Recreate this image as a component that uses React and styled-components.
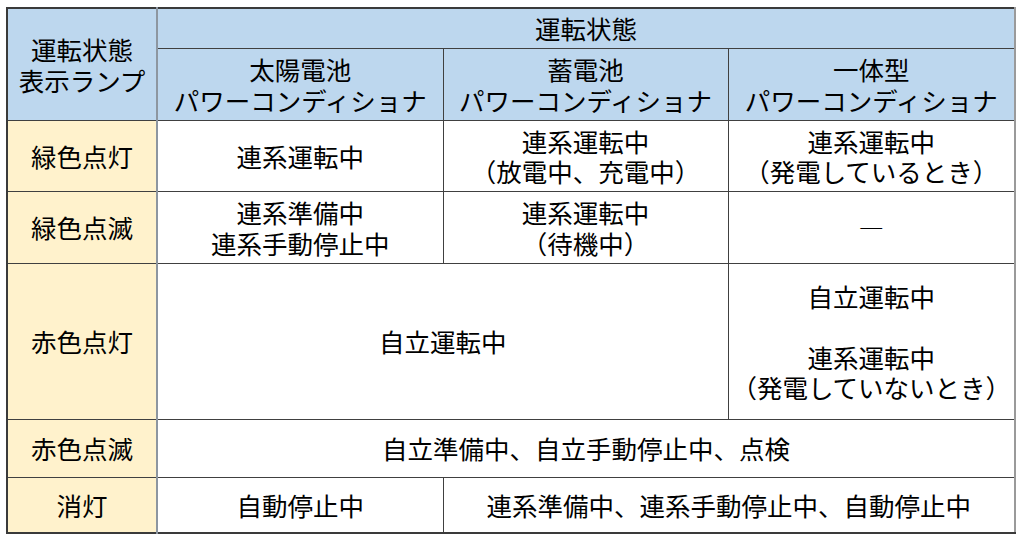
import React from "react";
import styled, { createGlobalStyle } from "styled-components";

const Global = createGlobalStyle`
  html, body { margin: 0; padding: 0; background: #ffffff; }
  body { font-family: "Noto Sans CJK JP", "Noto Sans", sans-serif; color: #000; }
`;

const Page = styled.div`
  padding: 7px 0 0 6px;
`;

const Table = styled.table`
  border-collapse: collapse;
  table-layout: fixed;
  width: 1008px;
  border: 2px solid #3a3a3a;
  border-right-color: #9a9a9a;
  font-size: 25.5px;
  line-height: 30.5px;
`;

const Cell = styled.td`
  border: 1px solid #404040;
  padding: 0;
  text-align: center;
  vertical-align: middle;
  white-space: nowrap;
  height: ${(p) => p.$h || "auto"};
  background: ${(p) =>
    p.$kind === "head" ? "#bdd7ee" : p.$kind === "lamp" ? "#fff2cc" : "#ffffff"};
  ${(p) => (p.$lamp ? "border-right: 2px solid #8d96a0;" : "")}
  ${(p) => (p.$lastCol ? "border-right-color: #9a9a9a;" : "")}
`;

const Line = styled.div`
  min-height: 30.5px;
`;

const Lines = ({ items }) => (
  <>
    {items.map((t, i) => (
      <Line key={i}>{t}</Line>
    ))}
  </>
);

export default function App() {
  return (
    <>
      <Global />
      <Page>
        <Table>
          <colgroup>
            <col style={{ width: 150 }} />
            <col style={{ width: 286 }} />
            <col style={{ width: 285 }} />
            <col style={{ width: 287 }} />
          </colgroup>
          <tbody>
            <tr>
              <Cell $kind="head" $lamp rowSpan={2}>
                <Lines items={["運転状態", "表示ランプ"]} />
              </Cell>
              <Cell $kind="head" $lastCol colSpan={3} $h="39px">
                運転状態
              </Cell>
            </tr>
            <tr>
              <Cell $kind="head" $h="71px">
                <Lines items={["太陽電池", "パワーコンディショナ"]} />
              </Cell>
              <Cell $kind="head">
                <Lines items={["蓄電池", "パワーコンディショナ"]} />
              </Cell>
              <Cell $kind="head" $lastCol>
                <Lines items={["一体型", "パワーコンディショナ"]} />
              </Cell>
            </tr>
            <tr>
              <Cell $kind="lamp" $lamp $h="70px">緑色点灯</Cell>
              <Cell>連系運転中</Cell>
              <Cell>
                <Lines items={["連系運転中", "（放電中、充電中）"]} />
              </Cell>
              <Cell $lastCol>
                <Lines items={["連系運転中", "（発電しているとき）"]} />
              </Cell>
            </tr>
            <tr>
              <Cell $kind="lamp" $lamp $h="71px">緑色点滅</Cell>
              <Cell>
                <Lines items={["連系準備中", "連系手動停止中"]} />
              </Cell>
              <Cell>
                <Lines items={["連系運転中", "（待機中）"]} />
              </Cell>
              <Cell $lastCol>―</Cell>
            </tr>
            <tr>
              <Cell $kind="lamp" $lamp $h="155px">赤色点灯</Cell>
              <Cell colSpan={2}>自立運転中</Cell>
              <Cell $lastCol>
                <Lines items={["自立運転中", "", "連系運転中", "（発電していないとき）"]} />
              </Cell>
            </tr>
            <tr>
              <Cell $kind="lamp" $lamp $h="57px">赤色点滅</Cell>
              <Cell colSpan={3} $lastCol>自立準備中、自立手動停止中、点検</Cell>
            </tr>
            <tr>
              <Cell $kind="lamp" $lamp $h="54px">消灯</Cell>
              <Cell>自動停止中</Cell>
              <Cell colSpan={2} $lastCol>連系準備中、連系手動停止中、自動停止中</Cell>
            </tr>
          </tbody>
        </Table>
      </Page>
    </>
  );
}
